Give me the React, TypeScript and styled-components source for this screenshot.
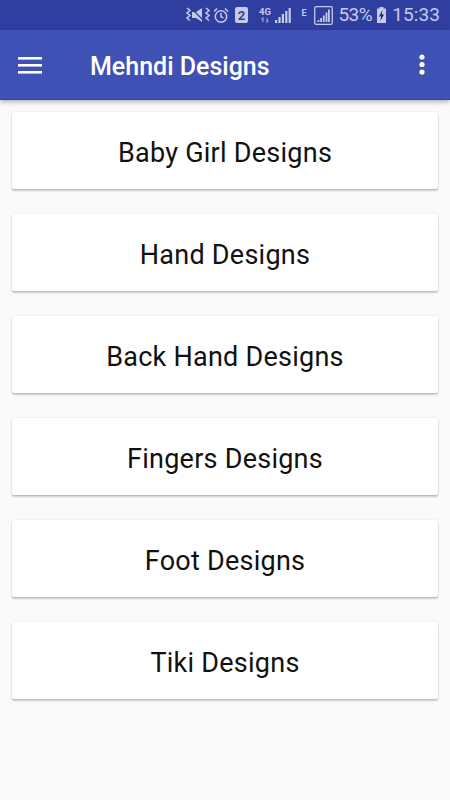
import React from "react";
import styled, { createGlobalStyle } from "styled-components";

const Global = createGlobalStyle`
  html, body { margin: 0; padding: 0; background: #fafafa; }
  body { font-family: Roboto, "Liberation Sans", sans-serif; }
`;
const Page = styled.div`
  width: 450px; height: 800px; background: #fafafa; display: flex; flex-direction: column; overflow: hidden;
`;
const StatusBar = styled.div`
  height: 30px; background: #303f9f; display: flex; align-items: center; justify-content: flex-end;
  padding-right: 10px; color: #c5cae9; flex: none; box-sizing: border-box;
`;
const StatusIcon = styled.svg<{ $mr?: number; $ml?: number }>`
  display: block; margin-right: ${(p) => p.$mr ?? 0}px; margin-left: ${(p) => p.$ml ?? 0}px; flex: none;
`;
const Percent = styled.span`
  font-size: 19px; margin-left: 5px; line-height: 30px; letter-spacing: -0.5px;
`;
const Clock = styled.span`
  font-size: 19px; margin-left: 6px; line-height: 30px; letter-spacing: 0.1px;
`;
const AppBar = styled.header`
  height: 70px; background: #3f51b5; border-bottom: 1px solid #2d45b0; box-sizing: border-box;
  box-shadow: 0 2px 5px rgba(0,0,0,.3); display: flex; align-items: center; flex: none; position: relative;
`;
const Menu = styled.svg`
  margin-left: 18px; display: block; flex: none;
`;
const Title = styled.h1`
  margin: 5px 0 0 48px; color: #fff; font-size: 25px; font-weight: 500; flex: 1; line-height: 30px;
`;
const More = styled.svg`
  margin: 1px 25px 0 0; display: block; flex: none;
`;
const List = styled.main`
  padding: 12px 12px 0 12px; display: flex; flex-direction: column; gap: 25px;
`;
const Card = styled.div`
  height: 77px; background: #fff; border-radius: 2px; display: flex; align-items: center; justify-content: center;
  box-sizing: border-box; padding-top: 5px;
  box-shadow: 0 1px 1px rgba(0,0,0,.06), 0 2px 2px rgba(0,0,0,.18), 0 0 2px rgba(0,0,0,.12);
  font-size: 27px; color: #111; letter-spacing: 0.25px;
`;

const items = ["Baby Girl Designs", "Hand Designs", "Back Hand Designs", "Fingers Designs", "Foot Designs", "Tiki Designs"];

export default function App() {
  return (
    <Page>
      <Global />
      <StatusBar>
        <StatusIcon width="24" height="18" viewBox="0 0 24 18" $mr={3} fill="none" stroke="#c5cae9" strokeWidth="1.5">
          <path d="M6 6h4l6-4v14l-6-4H6z" fill="#c5cae9" stroke="none" />
          <path d="M6 3l13 13" stroke="#303f9f" strokeWidth="1.3" />
          <path d="M1 2l3 2.5-3 2.5 3 2.5-3 2.5 3 2.5M20 2l3 2.5-3 2.5 3 2.5-3 2.5 3 2.5" />
        </StatusIcon>
        <StatusIcon width="16" height="17" viewBox="0 0 16 17" $mr={6} fill="none" stroke="#c5cae9" strokeWidth="1.5">
          <circle cx="8" cy="9.5" r="5.7" />
          <path d="M8 6v3.7l2.4 1.2M1 4.5l3-3M15 4.5l-3-3" />
        </StatusIcon>
        <StatusIcon width="13" height="16" viewBox="0 0 13 16" $mr={10}>
          <rect width="13" height="16" rx="2" fill="#c5cae9" />
          <text x="6.5" y="13" fontSize="13" fontWeight="700" textAnchor="middle" fill="#303f9f" fontFamily="Roboto">2</text>
        </StatusIcon>
        <StatusIcon width="14" height="18" viewBox="0 0 14 18" $mr={3}>
          <text x="7" y="9" fontSize="9.5" fontWeight="700" textAnchor="middle" fill="#c5cae9" fontFamily="Roboto">4G</text>
          <path d="M5 16v-4l-1.5 1.5M9 12v4l1.5-1.5" stroke="#8f9ad0" strokeWidth="1.3" fill="none" />
        </StatusIcon>
        <StatusIcon width="16" height="18" viewBox="0 0 16 18" $mr={9} fill="#c5cae9">
          <rect x="0" y="14" width="2.2" height="3" />
          <rect x="3.4" y="11" width="2.2" height="6" />
          <rect x="6.8" y="8" width="2.2" height="9" />
          <rect x="10.2" y="5" width="2.2" height="12" />
          <rect x="13.6" y="2" width="2.2" height="15" />
        </StatusIcon>
        <StatusIcon width="8" height="18" viewBox="0 0 8 18" $mr={6}>
          <text x="4" y="10" fontSize="9" fontWeight="700" textAnchor="middle" fill="#c5cae9" fontFamily="Roboto">E</text>
        </StatusIcon>
        <StatusIcon width="19" height="19" viewBox="0 0 19 19" fill="#c5cae9">
          <rect x=".7" y=".7" width="17.6" height="17.6" rx="1.5" fill="none" stroke="#c5cae9" strokeWidth="1.3" />
          <rect x="3.5" y="14" width="1.8" height="2" />
          <rect x="6.2" y="12" width="1.8" height="4" />
          <rect x="8.9" y="9.5" width="1.8" height="6.5" />
          <rect x="11.6" y="6.5" width="1.8" height="9.5" />
          <rect x="14" y="3.5" width="1.8" height="12.5" />
        </StatusIcon>
        <Percent>53%</Percent>
        <StatusIcon width="9" height="16" viewBox="0 0 9 16" $ml={5}>
          <path d="M2.5 0h4v1.5H9V16H0V1.5h2.5z" fill="#c5cae9" />
          <path d="M5.5 3L2 9.5h2.2L3.4 14 7 7.5H4.8z" fill="#1f2a70" />
        </StatusIcon>
        <Clock>15:33</Clock>
      </StatusBar>
      <AppBar>
        <Menu width="24" height="18" viewBox="0 0 24 18" fill="#fff">
          <rect y="1" width="24" height="2.6" />
          <rect y="8" width="24" height="2.6" />
          <rect y="15" width="24" height="2.6" />
        </Menu>
        <Title>Mehndi Designs</Title>
        <More width="6" height="22" viewBox="0 0 6 22" fill="#fff">
          <circle cx="3" cy="3" r="2.6" />
          <circle cx="3" cy="10.5" r="2.6" />
          <circle cx="3" cy="18" r="2.6" />
        </More>
      </AppBar>
      <List>
        {items.map((t) => (
          <Card key={t}>{t}</Card>
        ))}
      </List>
    </Page>
  );
}
